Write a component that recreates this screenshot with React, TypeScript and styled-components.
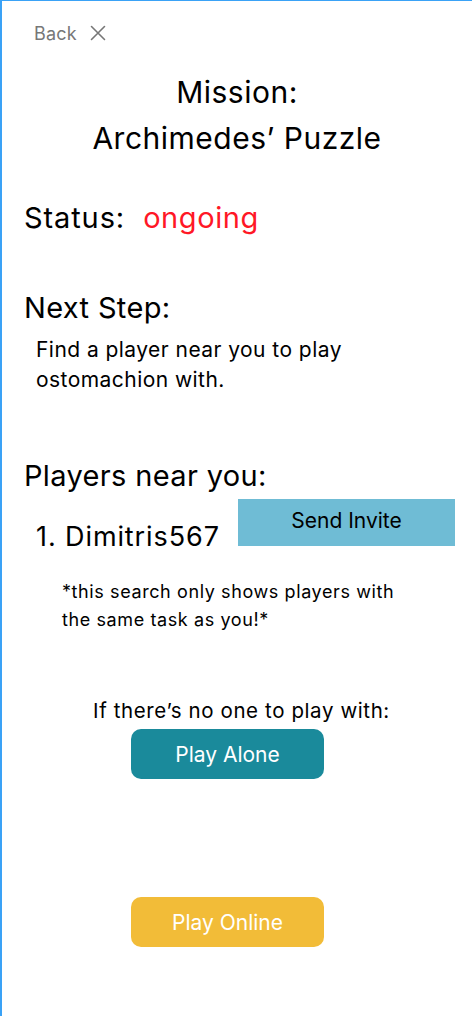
import React from "react";
import styled, { createGlobalStyle } from "styled-components";

const Global = createGlobalStyle`
  html, body { margin: 0; padding: 0; background: #fff; }
  body { font-family: "Inter", "Noto Sans", sans-serif; color: #000; }
`;

const Screen = styled.div`
  box-sizing: border-box;
  width: 472px;
  height: 1016px;
  border-left: 2px solid #3aa2f6;
  border-top: 1px solid #3aa2f6;
  background: #fff;
  display: flex;
  flex-direction: column;
`;

const TopBar = styled.div`
  display: flex;
  align-items: center;
  gap: 13px;
  padding: 20px 0 0 32px;
  height: 24px;
  color: #777;
  font-size: 18px;
`;

const BackLabel = styled.span`
  letter-spacing: 0.2px;
`;

const Title = styled.h1`
  margin: 24px 0 0 0;
  text-align: center;
  font-weight: 400;
  font-size: 30px;
  line-height: 46px;
  letter-spacing: 0.5px;
`;

const Heading = styled.h2<{ $top: number }>`
  margin: ${(p) => p.$top}px 0 0 22px;
  font-weight: 400;
  font-size: 29px;
  line-height: 36px;
  letter-spacing: 0.35px;
  display: flex;
  gap: 18px;
`;

const StatusLabel = styled.span`
  letter-spacing: 0.9px;
`;

const StatusValue = styled.span`
  color: #ff1726;
  letter-spacing: 0.6px;
`;

const Body = styled.p`
  margin: 9px 0 0 34px;
  font-size: 21px;
  line-height: 30px;
  letter-spacing: 0.45px;
  width: 360px;
`;

const PlayerRow = styled.div`
  display: flex;
  align-items: flex-end;
  margin: 5px 0 0 34px;
  height: 47px;
`;

const PlayerName = styled.span`
  font-size: 27px;
  line-height: 27px;
  letter-spacing: 0.9px;
  width: 202px;
  margin-bottom: -4px;
`;

const InviteButton = styled.button`
  width: 217px;
  height: 47px;
  border: none;
  background: #6fbcd5;
  color: #000;
  font-family: "Inter", sans-serif;
  font-size: 21px;
  padding: 0 0 4px 0;
`;

const Note = styled.p`
  margin: 32px 0 0 60px;
  font-size: 18px;
  line-height: 28px;
  letter-spacing: 0.6px;
  width: 348px;
`;

const Center = styled.div<{ $top: number }>`
  margin-top: ${(p) => p.$top}px;
  display: flex;
  flex-direction: column;
  align-items: center;
  padding-left: 9px;
`;

const Prompt = styled.p`
  margin: 0;
  font-size: 20.5px;
  line-height: 26px;
  letter-spacing: 0.6px;
`;

const ActionButton = styled.button<{ $bg: string; $gap: number }>`
  margin: ${(p) => p.$gap}px 0 0 -28px;
  width: 193px;
  height: 50px;
  border: none;
  border-radius: 10px;
  background: ${(p) => p.$bg};
  color: #fff;
  font-family: "Inter", sans-serif;
  font-size: 21px;
  padding: 0;
`;

export default function App() {
  return (
    <>
      <Global />
      <Screen>
        <TopBar>
          <BackLabel>Back</BackLabel>
          <svg width="16" height="16" viewBox="0 0 16 16" fill="none" stroke="#777" strokeWidth="1.6" strokeLinecap="round">
            <path d="M1.5 1.5 L14.5 14.5 M14.5 1.5 L1.5 14.5" />
          </svg>
        </TopBar>
        <Title>
          Mission:
          <br />
          Archimedes’ Puzzle
        </Title>
        <Heading $top={39}>
          <StatusLabel>Status:</StatusLabel>
          <StatusValue>ongoing</StatusValue>
        </Heading>
        <Heading $top={54}>Next Step:</Heading>
        <Body>Find a player near you to play ostomachion with.</Body>
        <Heading $top={63}>Players near you:</Heading>
        <PlayerRow>
          <PlayerName>1. Dimitris567</PlayerName>
          <InviteButton>Send Invite</InviteButton>
        </PlayerRow>
        <Note>*this search only shows players with the same task as you!*</Note>
        <Center $top={64}>
          <Prompt>If there’s no one to play with:</Prompt>
          <ActionButton $bg="#1a8a9b" $gap={5}>Play Alone</ActionButton>
        </Center>
        <Center $top={118}>
          <ActionButton $bg="#f2bc38" $gap={0}>Play Online</ActionButton>
        </Center>
      </Screen>
    </>
  );
}
